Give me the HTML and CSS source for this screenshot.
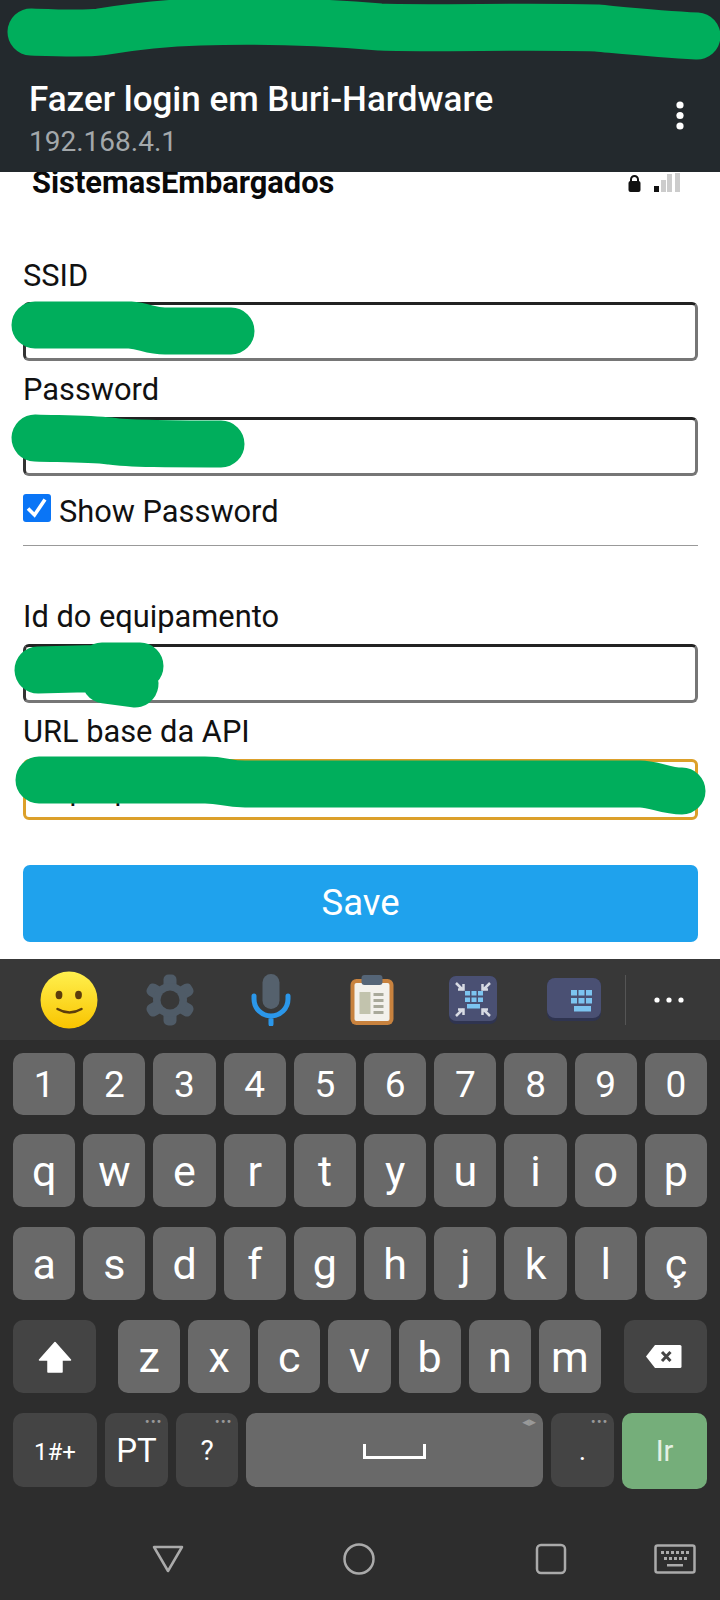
FILE: index.html
```html
<!DOCTYPE html>
<html lang="pt">
<head>
<meta charset="utf-8">
<title>Fazer login em Buri-Hardware</title>
<link rel="stylesheet" href="styles.css">
</head>
<body>
<header class="appbar">
  <div class="appbar-text">
    <div class="appbar-title">Fazer login em Buri-Hardware</div>
    <div class="appbar-url">192.168.4.1</div>
  </div>
  <svg class="appbar-menu" width="8" height="29" viewBox="0 0 8 29"><circle cx="4" cy="4" r="3.6"/><circle cx="4" cy="14.5" r="3.6"/><circle cx="4" cy="25" r="3.6"/></svg>
</header>

<main class="page">
  <div class="network">
    <span class="network-name">SistemasEmbargados</span>
    <svg class="network-icons" width="54" height="20" viewBox="0 0 54 20">
      <path d="M4 9V6.500a3.500 3.500 0 0 1 7 0V9" fill="none" stroke="#111" stroke-width="2"/>
      <rect x="1.500" y="8" width="12" height="11" rx="2" fill="#111"/>
      <rect x="27" y="13" width="5" height="6" fill="#111"/>
      <rect x="34" y="7" width="5" height="12" fill="#ccc"/>
      <rect x="40" y="1" width="5" height="18" fill="#ccc"/>
      <rect x="48" y="0" width="5" height="19" fill="#ccc"/>
    </svg>
  </div>
  <form class="form">
    <label class="label label-first">SSID</label>
    <input class="field field-a" type="text">
    <label class="label">Password</label>
    <input class="field field-a" type="text">
    <label class="show">
      <span class="check"><svg width="28" height="28" viewBox="0 0 28 28"><path d="M5 14.5l6.5 6.500L22 5.500" fill="none" stroke="#fff" stroke-width="3.600"/></svg></span>
      <span>Show Password</span>
    </label>
    <hr class="rule">
    <label class="label label-id">Id do equipamento</label>
    <input class="field field-b" type="text">
    <label class="label">URL base da API</label>
    <input class="field field-focus" type="text" value="http://p">
    <button class="save" type="button">Save</button>
  </form>
</main>

<section class="keyboard">
  <div class="toolbar">
    <div class="tool">
      <svg width="58" height="58" viewBox="0 0 58 58">
        <defs><linearGradient id="smile" x1="0" y1="0" x2="0" y2="1"><stop offset="0" stop-color="#fff04e"/><stop offset="1" stop-color="#f9c400"/></linearGradient></defs>
        <circle cx="29" cy="29" r="28.500" fill="url(#smile)"/>
        <ellipse cx="19" cy="24" rx="3.400" ry="4.200" fill="#5c3d0c"/>
        <ellipse cx="38.500" cy="24" rx="3.400" ry="4.200" fill="#5c3d0c"/>
        <path d="M17.500 38q12 7 24 0" fill="none" stroke="#5c3d0c" stroke-width="2.500" stroke-linecap="round"/>
      </svg>
    </div>
    <div class="tool">
      <svg width="52" height="52" viewBox="0 0 52 52">
        <g fill="#4f5b67">
          <rect x="19.500" y="0.500" width="13" height="51" rx="5"/>
          <rect x="19.500" y="0.500" width="13" height="51" rx="5" transform="rotate(60 26 26)"/>
          <rect x="19.500" y="0.500" width="13" height="51" rx="5" transform="rotate(120 26 26)"/>
          <circle cx="26" cy="26" r="17"/>
        </g>
        <circle cx="26" cy="26" r="9.500" fill="#383838"/>
      </svg>
    </div>
    <div class="tool">
      <svg width="40" height="52" viewBox="0 0 40 52">
        <rect x="11.500" y="0" width="17" height="35" rx="8.500" fill="#55616d"/>
        <path d="M3 22v3a17 17 0 0 0 34 0v-3M20 42v8" fill="none" stroke="#2b97ea" stroke-width="5" stroke-linecap="round"/>
      </svg>
    </div>
    <div class="tool">
      <svg width="44" height="50" viewBox="0 0 44 50">
        <rect x="0.500" y="4" width="43" height="46" rx="6" fill="#c8823e"/>
        <rect x="4.500" y="8" width="35" height="38" rx="2" fill="#f3f1ec"/>
        <rect x="11.500" y="0" width="21" height="10" rx="3" fill="#556577"/>
        <rect x="9.500" y="17" width="11" height="22" fill="#c2c3ad"/>
        <g fill="#a9a99a"><rect x="23.500" y="18" width="10" height="3"/><rect x="23.500" y="24" width="10" height="3"/><rect x="23.500" y="30" width="10" height="3"/><rect x="23.500" y="36" width="10" height="3"/></g>
      </svg>
    </div>
    <div class="tool">
      <svg width="48" height="48" viewBox="0 0 48 48">
        <rect x="0" y="0" width="48" height="48" rx="7" fill="#2f3450"/>
        <rect x="0" y="0" width="48" height="45" rx="7" fill="#4a5073"/>
        <g fill="#7cc4f0"><rect x="16" y="15" width="5" height="4.500"/><rect x="22.500" y="15" width="5" height="4.500"/><rect x="29" y="15" width="5" height="4.500"/><rect x="16" y="21.500" width="5" height="4.500"/><rect x="22.500" y="21.500" width="5" height="4.500"/><rect x="29" y="21.500" width="5" height="4.500"/><rect x="18" y="28" width="13" height="4.500"/></g>
        <g fill="none" stroke="#d8dbe4" stroke-width="2.500"><path d="M7 7l7 7M9 13.500h5.500V8"/><path d="M41 7l-7 7M39 13.500h-5.500V8"/><path d="M7 40l7-7M9 33.500h5.500V39"/><path d="M41 40l-7-7M39 33.500h-5.500V39"/></g>
      </svg>
    </div>
    <div class="tool">
      <svg width="54" height="43" viewBox="0 0 54 43">
        <rect x="0" y="0" width="54" height="43" rx="8" fill="#2f3450"/>
        <rect x="0" y="0" width="54" height="40" rx="8" fill="#4a5073"/>
        <g fill="#7cc4f0"><rect x="24" y="12" width="6" height="5.500"/><rect x="31.500" y="12" width="6" height="5.500"/><rect x="39" y="12" width="6" height="5.500"/><rect x="24" y="20" width="6" height="5.500"/><rect x="31.500" y="20" width="6" height="5.500"/><rect x="39" y="20" width="6" height="5.500"/><rect x="27" y="28" width="17" height="5.500"/></g>
      </svg>
    </div>
    <div class="tool-divider"></div>
    <svg class="tool-more" width="30" height="6" viewBox="0 0 30 6"><circle cx="3" cy="3" r="2.600"/><circle cx="15" cy="3" r="2.600"/><circle cx="27" cy="3" r="2.600"/></svg>
  </div>

  <div class="keys">
    <div class="row row-num">
      <div class="key num">1</div><div class="key num">2</div><div class="key num">3</div><div class="key num">4</div><div class="key num">5</div><div class="key num">6</div><div class="key num">7</div><div class="key num">8</div><div class="key num">9</div><div class="key num">0</div>
    </div>
    <div class="row">
      <div class="key">q</div><div class="key">w</div><div class="key">e</div><div class="key">r</div><div class="key">t</div><div class="key">y</div><div class="key">u</div><div class="key">i</div><div class="key">o</div><div class="key">p</div>
    </div>
    <div class="row">
      <div class="key">a</div><div class="key">s</div><div class="key">d</div><div class="key">f</div><div class="key">g</div><div class="key">h</div><div class="key">j</div><div class="key">k</div><div class="key">l</div><div class="key">ç</div>
    </div>
    <div class="row">
      <div class="key alt key-shift">
        <svg width="34" height="32" viewBox="0 0 34 32"><path d="M17 1.500L32.500 19H24v12H10V19H1.500z" fill="#fff" stroke="#fff" stroke-width="1.500" stroke-linejoin="round"/></svg>
      </div>
      <div class="key">z</div><div class="key">x</div><div class="key">c</div><div class="key">v</div><div class="key">b</div><div class="key">n</div><div class="key">m</div>
      <div class="key alt key-del">
        <svg class="del-icon" width="37" height="25" viewBox="0 0 37 25"><path d="M10 1h25a1.500 1.500 0 0 1 1.500 1.500v20a1.500 1.500 0 0 1-1.500 1.500H10L1 12.500z" fill="#fff"/><path d="M17 8l8.500 9M25.500 8L17 17" stroke="#444" stroke-width="3" fill="none"/></svg>
      </div>
    </div>
    <div class="row row-bottom">
      <div class="key alt key-sym">1#+</div>
      <div class="key alt key-lang">PT<span class="more">•••</span></div>
      <div class="key alt key-q">?<span class="more">•••</span></div>
      <div class="key key-space"><span class="spacebar"></span><span class="more more-arrows">◀▶</span></div>
      <div class="key alt key-dot">.<span class="more">•••</span></div>
      <div class="key key-go">Ir</div>
    </div>
  </div>

  <nav class="nav">
    <svg class="nav-back" width="32" height="28" viewBox="0 0 32 28"><path d="M2 2h28L16 26z" fill="none" stroke="#aaa" stroke-width="2.500" stroke-linejoin="round"/></svg>
    <svg class="nav-home" width="32" height="32" viewBox="0 0 32 32"><circle cx="16" cy="16" r="14.500" fill="none" stroke="#aaa" stroke-width="2.500"/></svg>
    <svg class="nav-recent" width="32" height="32" viewBox="0 0 32 32"><rect x="2" y="2" width="28" height="28" rx="4" fill="none" stroke="#aaa" stroke-width="2.500"/></svg>
    <svg class="nav-kbd" width="42" height="30" viewBox="0 0 42 30">
      <rect x="1.500" y="1.500" width="39" height="27" rx="2" fill="none" stroke="#aaa" stroke-width="2.500"/>
      <g fill="#aaa"><rect x="7" y="7" width="3" height="3"/><rect x="12" y="7" width="3" height="3"/><rect x="17" y="7" width="3" height="3"/><rect x="22" y="7" width="3" height="3"/><rect x="27" y="7" width="3" height="3"/><rect x="32" y="7" width="3" height="3"/><rect x="10" y="13" width="3" height="3"/><rect x="15" y="13" width="3" height="3"/><rect x="20" y="13" width="3" height="3"/><rect x="25" y="13" width="3" height="3"/><rect x="30" y="13" width="3" height="3"/><rect x="13" y="20" width="16" height="2.500"/></g>
    </svg>
  </nav>
</section>

<svg class="redactions" width="720" height="1600" viewBox="0 0 720 1600">
  <circle cx="210" cy="42" r="3" fill="#c8cccc"/>
  <g fill="none" stroke="#00ae5c" stroke-width="47" stroke-linecap="round" stroke-linejoin="round">
    <path d="M31 32C60 33 85 34 100 32C130 27 160 23 200 22C260 20 320 22 380 27C440 29 520 26 597 28C630 31 660 34 697 36"/>
    <path d="M35 325H130C145 326 150 331 165 331H231"/>
    <path d="M35 438C70 439 90 439 110 441C130 444 170 444 221 444"/>
    <path d="M38 670L115 668M102 666H140M105 680L135 684"/>
    <path d="M39 780H205C225 780 225 784 245 784H640C655 784 665 791 682 791"/>
  </g>
</svg>
</body>
</html>
```
FILE: styles.css
```css
* { box-sizing: border-box; }

html, body {
  margin: 0;
  padding: 0;
}

body {
  position: relative;
  width: 720px;
  height: 1600px;
  overflow: hidden;
  background: #fff;
  font-family: Roboto, "Liberation Sans", sans-serif;
  color: #111;
}

.appbar {
  display: flex;
  justify-content: space-between;
  height: 172px;
  padding: 80px 36px 0 29px;
  background: #23292d;
}

.appbar-title {
  font-size: 35px;
  font-weight: 500;
  line-height: 40px;
  color: #fff;
}

.appbar-url {
  margin-top: 6px;
  font-size: 28px;
  line-height: 32px;
  color: #a3a8ab;
}

.appbar-menu {
  margin-top: 21px;
  fill: #fff;
}

.page {
  height: 787px;
  overflow: hidden;
  background: #fff;
}

.network {
  display: flex;
  justify-content: space-between;
  align-items: flex-end;
  padding: 0 39px 0 32px;
}

.network-name {
  font-size: 30.800px;
  font-weight: 700;
  line-height: 21px;
  color: #0a0a0a;
}

.network-icons {
  margin-top: 1px;
}

.form {
  display: flex;
  flex-direction: column;
  padding: 0 22px 0 23px;
}

.label {
  display: block;
  margin-top: 11px;
  margin-bottom: 9px;
  font-size: 30.800px;
  line-height: 36px;
  color: #111;
}

.label-first {
  margin-top: 65px;
  margin-bottom: 8px;
}

.label-id {
  margin-top: 53px;
}

.field {
  display: block;
  width: 100%;
  height: 58px;
  padding: 0 8px;
  background: #fff;
  border: 3px solid;
  border-color: #222 #767676 #767676 #333;
  border-radius: 6px;
  font-family: Roboto, "Liberation Sans", sans-serif;
  font-size: 29.500px;
  color: #111;
  outline: none;
}

.field-a {
  height: 59px;
}

.field-b {
  height: 59px;
}

.field-focus {
  height: 61px;
  border-color: #dca02a;
}

.show {
  display: flex;
  align-items: flex-start;
  margin-top: 18px;
  font-size: 30.800px;
  line-height: 36px;
  color: #111;
}

.show span:last-child {
  margin-left: 8px;
}

.check {
  display: block;
  flex: none;
  width: 28px;
  height: 28px;
  border-radius: 3px;
  background: #0a75f6;
}

.check svg {
  display: block;
}

.rule {
  width: 100%;
  height: 1px;
  margin: 0;
  margin-top: 15px;
  border: 0;
  background: #999;
}

.save {
  display: block;
  width: 100%;
  height: 77px;
  margin-top: 45px;
  padding: 0 0 3px;
  border: 0;
  border-radius: 7px;
  background: #1fa2ed;
  font-family: Roboto, "Liberation Sans", sans-serif;
  font-size: 36.500px;
  color: #fff;
}

.keyboard {
  height: 641px;
  background: #2d2d2d;
}

.toolbar {
  display: flex;
  align-items: center;
  height: 81px;
  padding-left: 18px;
  background: #383838;
}

.tool {
  display: flex;
  justify-content: center;
  align-items: center;
  width: 101px;
}

.tool svg {
  display: block;
}

.tool-divider {
  width: 1px;
  height: 50px;
  margin-left: 1px;
  background: #555;
}

.tool-more {
  margin-left: 28px;
  fill: #fff;
}

.keys {
  display: flex;
  flex-direction: column;
  gap: 20px;
  padding: 13px 13px 0;
}

.row {
  display: flex;
  align-items: flex-start;
  gap: 8px;
  height: 73px;
}

.row-num {
  height: 62px;
  margin-bottom: -1px;
}

.row-bottom {
  height: 74px;
}

.key {
  position: relative;
  display: flex;
  flex: 1 1 0;
  justify-content: center;
  align-items: center;
  height: 100%;
  border-radius: 10px;
  background: #696969;
  font-size: 43px;
  color: #fff;
}

.num {
  font-size: 37px;
}

.alt {
  background: #444;
}

.key-shift {
  flex: none;
  width: 83px;
  margin-right: 14px;
}

.key-del {
  flex: none;
  width: 83px;
  margin-left: 15px;
}

.del-icon {
  margin-right: 3px;
}

.key-sym {
  flex: none;
  width: 84px;
  padding-top: 4px;
  font-size: 24px;
}

.key-lang {
  flex: none;
  width: 63px;
  font-size: 33px;
}

.key-q {
  flex: none;
  width: 62px;
  font-size: 28px;
}

.key-space {
  flex: none;
  width: 297px;
}

.key-dot {
  flex: none;
  width: 63px;
  font-size: 28px;
}

.key-go {
  flex: none;
  width: 85px;
  height: 76px;
  background: #75ae7a;
  font-size: 29px;
  color: #e4f0e4;
}

.spacebar {
  display: block;
  width: 63px;
  height: 15px;
  margin-top: 2px;
  border: 3px solid #fff;
  border-top: 0;
}

.more {
  position: absolute;
  top: 2px;
  right: 6px;
  font-family: "DejaVu Sans", sans-serif;
  font-size: 10px;
  line-height: 14px;
  letter-spacing: 0;
  color: #999;
}

.more-arrows {
  font-size: 9px;
  right: 7px;
}

.nav {
  display: flex;
  align-items: center;
  height: 32px;
  margin-top: 56px;
  padding-left: 152px;
}

.nav-home {
  margin-left: 159px;
}

.nav-recent {
  margin-left: 160px;
}

.nav-kbd {
  margin-left: 87px;
}

.redactions {
  position: absolute;
  top: 0;
  left: 0;
  pointer-events: none;
}
```
